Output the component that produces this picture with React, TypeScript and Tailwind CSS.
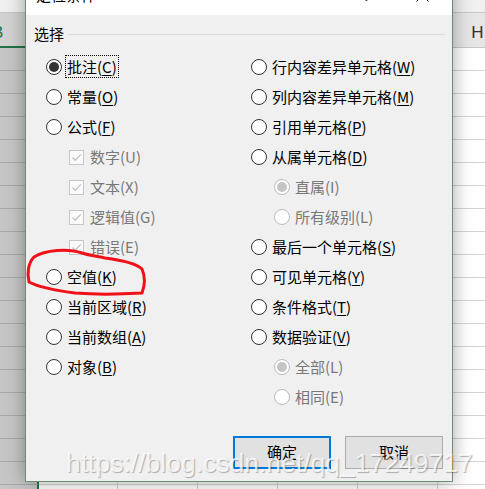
import React from "react";

type Item = {
  t: "radio" | "check";
  label: string;
  k: string;
  checked?: boolean;
  disabled?: boolean;
  indent?: boolean;
  focus?: boolean;
};

const left: Item[] = [
  { t: "radio", label: "批注", k: "C", checked: true, focus: true },
  { t: "radio", label: "常量", k: "O" },
  { t: "radio", label: "公式", k: "F" },
  { t: "check", label: "数字", k: "U", checked: true, disabled: true, indent: true },
  { t: "check", label: "文本", k: "X", checked: true, disabled: true, indent: true },
  { t: "check", label: "逻辑值", k: "G", checked: true, disabled: true, indent: true },
  { t: "check", label: "错误", k: "E", checked: true, disabled: true, indent: true },
  { t: "radio", label: "空值", k: "K" },
  { t: "radio", label: "当前区域", k: "R" },
  { t: "radio", label: "当前数组", k: "A" },
  { t: "radio", label: "对象", k: "B" },
];

const right: Item[] = [
  { t: "radio", label: "行内容差异单元格", k: "W" },
  { t: "radio", label: "列内容差异单元格", k: "M" },
  { t: "radio", label: "引用单元格", k: "P" },
  { t: "radio", label: "从属单元格", k: "D" },
  { t: "radio", label: "直属", k: "I", checked: true, disabled: true, indent: true },
  { t: "radio", label: "所有级别", k: "L", disabled: true, indent: true },
  { t: "radio", label: "最后一个单元格", k: "S" },
  { t: "radio", label: "可见单元格", k: "Y" },
  { t: "radio", label: "条件格式", k: "T" },
  { t: "radio", label: "数据验证", k: "V" },
  { t: "radio", label: "全部", k: "L", checked: true, disabled: true, indent: true },
  { t: "radio", label: "相同", k: "E", disabled: true, indent: true },
];

function Radio({ checked, disabled }: { checked?: boolean; disabled?: boolean }) {
  return (
    <span
      className={
        disabled
          ? "flex h-4 w-4 shrink-0 items-center justify-center rounded-full border border-[#bcbcbc] bg-white"
          : "flex h-4 w-4 shrink-0 items-center justify-center rounded-full border border-[#333333] bg-white"
      }
    >
      {checked && (
        <span
          className={
            disabled ? "h-[10px] w-[10px] rounded-full bg-[#c4c4c4]" : "h-[10px] w-[10px] rounded-full bg-[#333333]"
          }
        />
      )}
    </span>
  );
}

function Check() {
  return (
    <span className="flex h-[15px] w-[15px] shrink-0 items-center justify-center border border-[#c6c6c6] bg-[#fafafa]">
      <svg width="13" height="13" viewBox="0 0 13 13">
        <path d="M2.5 6.5 L5.2 9.2 L10.8 3.4" fill="none" stroke="#c2c2c2" strokeWidth="1.3" />
      </svg>
    </span>
  );
}

function Row({ it }: { it: Item }) {
  return (
    <div className={it.indent ? "flex h-[30px] items-center pl-[23px]" : "flex h-[30px] items-center"}>
      {it.t === "radio" ? <Radio checked={it.checked} disabled={it.disabled} /> : <Check />}
      <span
        className={
          (it.t === "check" ? "ml-[4px] " : "ml-[3px] ") +
          (it.focus
            ? "-translate-y-px border border-dotted border-black px-px leading-[21px] "
            : "-translate-y-px border border-transparent px-px leading-[21px] ") +
          (it.disabled ? "text-[#787878]" : "text-black")
        }
      >
        {it.label}(
        <span className={it.disabled ? "" : "underline decoration-1 underline-offset-[2px]"}>{it.k}</span>)
      </span>
    </div>
  );
}

function SheetRow({ header }: { header?: boolean }) {
  if (header) {
    return (
      <div className="grid h-[35px] grid-cols-[39px_79px_80px_80px_80px_80px_80px] font-['Liberation_Sans',sans-serif] text-[17px]">
        <div className="flex items-center overflow-hidden border-b-2 border-r border-b-[#217346] border-r-[#c6c6c6] bg-[#d2d2d2] pt-[6px] text-[#217346]">
          <span className="-ml-[8px]">B</span>
        </div>
        {["C", "D", "E", "F", "G", "H"].map((c) => (
          <div
            key={c}
            className="flex items-center justify-center border-b border-r border-[#c6c6c6] bg-[#e6e6e6] pt-[6px] text-[#333333]"
          >
            {c}
          </div>
        ))}
      </div>
    );
  }
  return (
    <div className="grid h-[23px] shrink-0 grid-cols-[39px_79px_80px_80px_80px_80px_80px]">
      <div className="border-b border-r-2 border-b-[#a8a8a8] border-r-[#217346] bg-[#c6c6c6]" />
      {[0, 1, 2, 3, 4, 5].map((i) => (
        <div key={i} className="border-b border-r border-[#d4d4d4] bg-white" />
      ))}
    </div>
  );
}

export default function App() {
  const rows = Array.from({ length: 20 }, (_, i) => i);
  return (
    <div className="relative h-[489px] w-[485px] overflow-hidden bg-white font-['Noto_Sans_CJK_SC',sans-serif] text-[15px] text-black">
      {/* spreadsheet background */}
      <div className="flex flex-col">
        <div className="h-[13px] border-b border-[#c6c6c6] bg-[#f0f0f0]" />
        <SheetRow header />
        {rows.map((r) => (
          <SheetRow key={r} />
        ))}
      </div>

      {/* dialog */}
      <div className="absolute left-[25px] top-[-15px] flex h-[497px] w-[428px] flex-col border border-[#6f8c6f] bg-[#f0f0f0] shadow-[0_0_18px_rgba(0,0,0,0.35)]">
        <div className="flex h-[29px] items-start bg-white">
          <span className="ml-[10px] leading-[18px]">定位条件</span>
          <span className="ml-auto leading-[18px] text-[#333]">?</span>
          <svg className="ml-[46px] mr-[23px] mt-[3px]" width="13" height="13" viewBox="0 0 13 13">
            <path d="M0.5 0.5 L12.5 12.5 M12.5 0.5 L0.5 12.5" stroke="#000" strokeWidth="1" />
          </svg>
        </div>
        <div className="flex flex-1 flex-col pl-[8px] pr-[7px] pt-[10px]">
          <div className="flex h-[20px] items-center">
            <span className="-translate-y-px leading-[20px]">选择</span>
            <div className="ml-[4px] mt-[-1px] h-px flex-1 bg-[#dcdcdc]" />
          </div>
          <div className="ml-[12px] mt-[7px] grid grid-cols-[205px_1fr]">
            <div className="flex flex-col">
              {left.map((it, i) => (
                <Row key={i} it={it} />
              ))}
            </div>
            <div className="flex flex-col">
              {right.map((it, i) => (
                <Row key={i} it={it} />
              ))}
            </div>
          </div>
          <div className="mt-[24px] flex justify-end gap-[14px] pr-[2px]">
            <button className="flex h-[33px] w-[98px] items-center justify-center border-2 border-[#0078d7] bg-[#e1e1e1] leading-[20px]">
              <span className="-translate-y-px">确定</span>
            </button>
            <button className="flex h-[33px] w-[98px] items-center justify-center border border-[#adadad] bg-[#e1e1e1] leading-[20px]">
              <span className="-translate-y-px">取消</span>
            </button>
          </div>
        </div>
      </div>

      {/* red annotation */}
      <svg className="pointer-events-none absolute left-0 top-0" width="485" height="489" viewBox="0 0 485 489">
        <path
          d="M82 253 C68 248 45 250 34 257 C28 263 27 274 29 282 C40 288 60 291 75 293 C100 295 125 294 142 293 C145 285 145 276 142 269 C136 263 120 260 105 258 C95 256 88 255 82 253"
          fill="none"
          stroke="#f01018"
          strokeWidth="3"
          strokeLinecap="round"
        />
      </svg>

      {/* watermark */}
      <div className="pointer-events-none absolute left-[66px] top-[450px] whitespace-nowrap font-['Liberation_Sans',sans-serif] text-[26.5px] leading-[27px] text-[rgba(255,255,255,0.78)] [text-shadow:1px_1px_1px_rgba(0,0,0,0.28)]">
        https://blog.csdn.net/qq_17249717
      </div>
    </div>
  );
}
